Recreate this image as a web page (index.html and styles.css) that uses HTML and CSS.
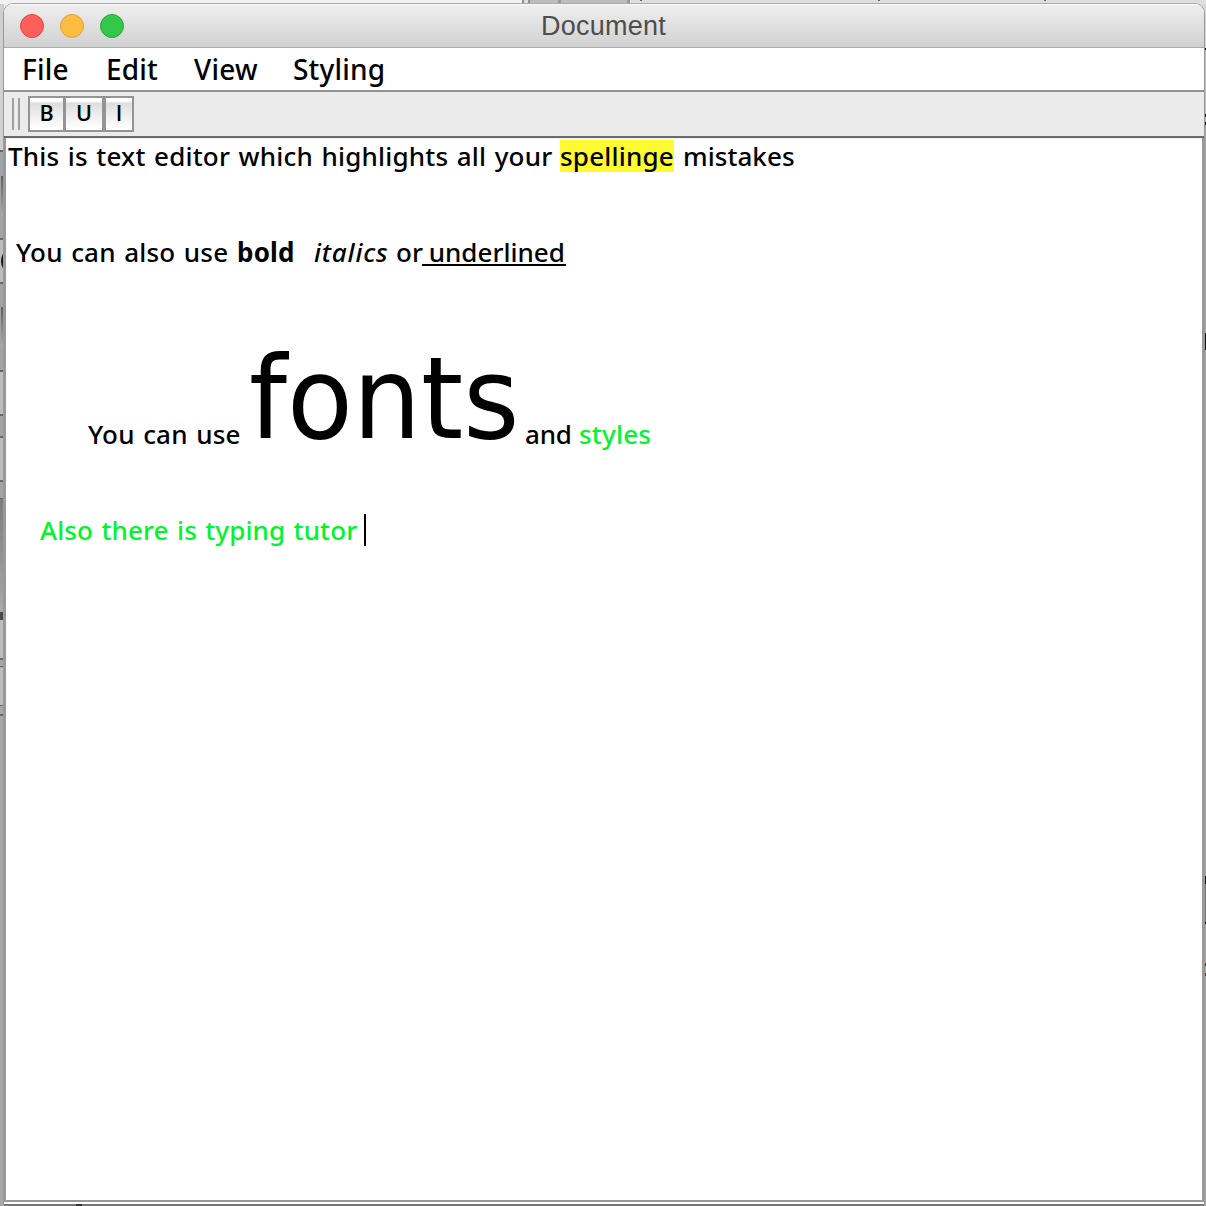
FILE: index.html
```html
<!DOCTYPE html>
<html lang="en">
<head>
<meta charset="utf-8">
<title>Document</title>
<link rel="stylesheet" href="styles.css">
</head>
<body>
<svg class="desktop" viewBox="0 0 1206 1206" aria-hidden="true">
  <defs><linearGradient id="g" x1="0" y1="0" x2="0" y2="1"><stop offset="0" stop-color="#5c5f64"/><stop offset="1" stop-color="#aaabae"/></linearGradient></defs>
  <rect width="1206" height="1206" fill="#a7a7a7"/>
  <rect width="1206" height="20" fill="#dedede"/><rect width="522" height="20" fill="#f1f1f1"/>
  <path fill="#8b8e96" d="M522 0h2v4h-2zM528 0h2v4h-2z"/><path fill="#bdbdbd" d="M530 0h100v4H530z"/><path fill="#999" d="M558 0h3v4h-3zM627 0h3v4h-3z"/>
  <path fill="#666" d="M640 0h2v1h-2zM878 0h2v1h-2zM1044 0h2v1h-2z"/>
  <rect y="4" width="4" height="146" fill="#d0d0d0"/><rect y="150" width="4" height="350" fill="#a0a3a8"/>
  <path fill="#bdbdbd" d="M0 240h4v42H0zM0 372h4v42H0zM0 438h4v42H0zM0 620h4v38H0zM0 668h4v37H0z"/>
  <path fill="#65686d" d="M0 150h4v2H0zM0 238h4v2H0zM0 282h4v2H0zM0 370h4v2H0zM0 414h4v2H0zM0 436h4v2H0zM0 480h4v2H0zM0 498h4v1H0zM0 658h4v2H0zM0 666h4v1H0zM0 705h4v1H0zM0 714h4v2H0z"/>
  <rect x="1" y="176" width="3" height="40" fill="url(#g)"/><rect x="1" y="307" width="3" height="40" fill="url(#g)"/>
  <rect y="499" width="4" height="113" fill="url(#g)" opacity=".6"/><rect y="612" width="4" height="8" fill="#494949"/>
  <path fill="none" stroke="#111" stroke-width="2" d="M4 254q-4 7 0 14"/>
  <rect x="1204" y="4" width="2" height="44" fill="#d6d6d6"/><rect x="1204" y="50" width="2" height="75" fill="#bbb"/><rect x="1204" y="876" width="2" height="48" fill="#777"/>
  <path fill="#151515" d="M1204 48h2v2h-2zM1204 114h2v3h-2zM1204 122h2v3h-2zM1204 333h2v17h-2zM1204 876h2v8h-2zM1204 922h2v2h-2z"/>
  <path fill="#8e2014" d="M1204 963h2v3h-2zM1204 973h2v3h-2z"/>
  <path fill="#777" d="M4 1204h1200v2H4z"/><path fill="#333" d="M76 1204h6v2h-6z"/>
</svg>
<main class="window">
  <header class="titlebar">
    <div class="lights"><i class="light close"></i><i class="light minimize"></i><i class="light zoom"></i></div>
    <h1 class="title">Document</h1>
  </header>
  <nav class="menubar"><span class="file">File</span><span class="edit">Edit</span><span class="view">View</span><span class="styling">Styling</span></nav>
  <div class="toolbar"><i class="grip"></i><button class="tool tool-b">B</button><button class="tool tool-u">U</button><button class="tool tool-i">I</button></div>
  <section class="editor">
    <p class="line line-1"><span class="t1">This is text editor which highlights all your </span><mark>spellinge</mark><span class="t2">mistakes</span></p>
    <p class="line line-2"><span class="t3">You can also use</span><b>bold</b><em>italics</em><span class="t4">or</span><u> underlined</u></p>
    <p class="line line-3"><span class="t5">You can use</span><span class="big">fonts</span><span class="t6">and</span><span class="green">styles</span></p>
    <p class="line line-4 green"><span class="t7">Also there is typing tutor</span><i class="caret"></i></p>
  </section>
</main>
</body>
</html>
```
FILE: styles.css
```css
* { box-sizing: border-box; }
body { margin: 0; width: 1206px; height: 1206px; overflow: hidden; padding: 3px 2px 2px 3px; font-family: "Noto Sans", sans-serif; color: #000; }
.desktop { position: absolute; inset: 0; width: 1206px; height: 1206px; z-index: -1; }
.window { width: 1202px; height: 1201px; border: 1px solid #999; border-top-color: #aaa; border-bottom: 0; border-radius: 10px 10px 0 0; overflow: hidden; background: #fff; display: flex; flex-direction: column; }
.titlebar { height: 44px; flex: none; display: grid; grid-template-columns: 1fr auto 1fr; align-items: center; padding: 0 17px 0 16px; background: linear-gradient(#efefef, #d1d1d1); border-bottom: 1px solid #aaa; box-shadow: inset 0 1px #f8f8f8; }
.lights { display: flex; gap: 16px; }
.light { width: 24px; height: 24px; border-radius: 50%; border: 1px solid; }
.close { background: #fc605b; border-color: #e2443f; }
.minimize { background: #fdbd41; border-color: #dfa036; }
.zoom { background: #34c84a; border-color: #24a733; }
.title { margin: 0; padding-top: 1px; font: 400 27px/42px "Liberation Sans", Arial, sans-serif; color: #4d4d4d; letter-spacing: .25px; }
.menubar { height: 44px; flex: none; border-bottom: 2px solid #929292; padding-left: 18px; display: flex; font-size: 28px; font-weight: 500; line-height: 42px; white-space: nowrap; letter-spacing: .2px; }
.file { width: 84px; } .edit { width: 88px; } .view { width: 99px; }
.toolbar { height: 46px; flex: none; background: #ebebeb; border-bottom: 2px solid #6b6b6b; padding: 4px 0 0 8px; display: flex; }
.grip { width: 8px; height: 32px; margin: 2px 8px 0 0; border: solid #a0a0a0; border-width: 0 2px; }
.tool { height: 36px; padding: 0 0 2px; border: 2px solid #949494; background: linear-gradient(#fff 0 10%, #dedede 16%, #fff 95%); font: 600 21.5px/30px "Open Sans", sans-serif; color: #000; }
.tool-b { width: 37px; } .tool-u { width: 40px; margin-left: -1px; } .tool-i { width: 30px; }
.editor { flex: none; height: 1064px; border: 2px solid #999; border-top: 0; padding: 2px 0 0 2px; box-shadow: inset 0 1px #eee; }
.line { margin: 0; height: 32px; display: flex; font-size: 26px; font-weight: 500; line-height: 32px; white-space: pre; letter-spacing: .2px; word-spacing: 1.5px; }
.line span, mark, b, em, u { display: block; flex: none; white-space: pre; }
mark { width: 114px; background: #fffa32; color: #000; margin-right: 9px; }
.t1 { width: 552px; }
.t2 { letter-spacing: .05px; }
.line-2 { margin-top: 64px; padding-left: 8px; }
.t3 { width: 221px; } b { width: 77px; } em { width: 82px; letter-spacing: .8px; } .t4 { width: 26px; }
u { width: 144px; text-decoration: none; height: 30px; border-bottom: 2px solid #000; letter-spacing: 0; word-spacing: 0; }
.line-3 { margin-top: 150px; padding-left: 80px; }
.t5 { width: 161px; } .big { width: 276px; font: 400 114px/32px "DejaVu Sans", sans-serif; margin-top: -35px; letter-spacing: 0; transform: scaleX(.945); transform-origin: left; } .t6 { width: 54px; letter-spacing: -.2px; }
.line-4 { margin-top: 64px; padding-left: 32px; }
.t7 { width: 324px; letter-spacing: .12px; }
.green { color: #00f52b; }
.caret { width: 2px; height: 32px; background: #000; }
```
